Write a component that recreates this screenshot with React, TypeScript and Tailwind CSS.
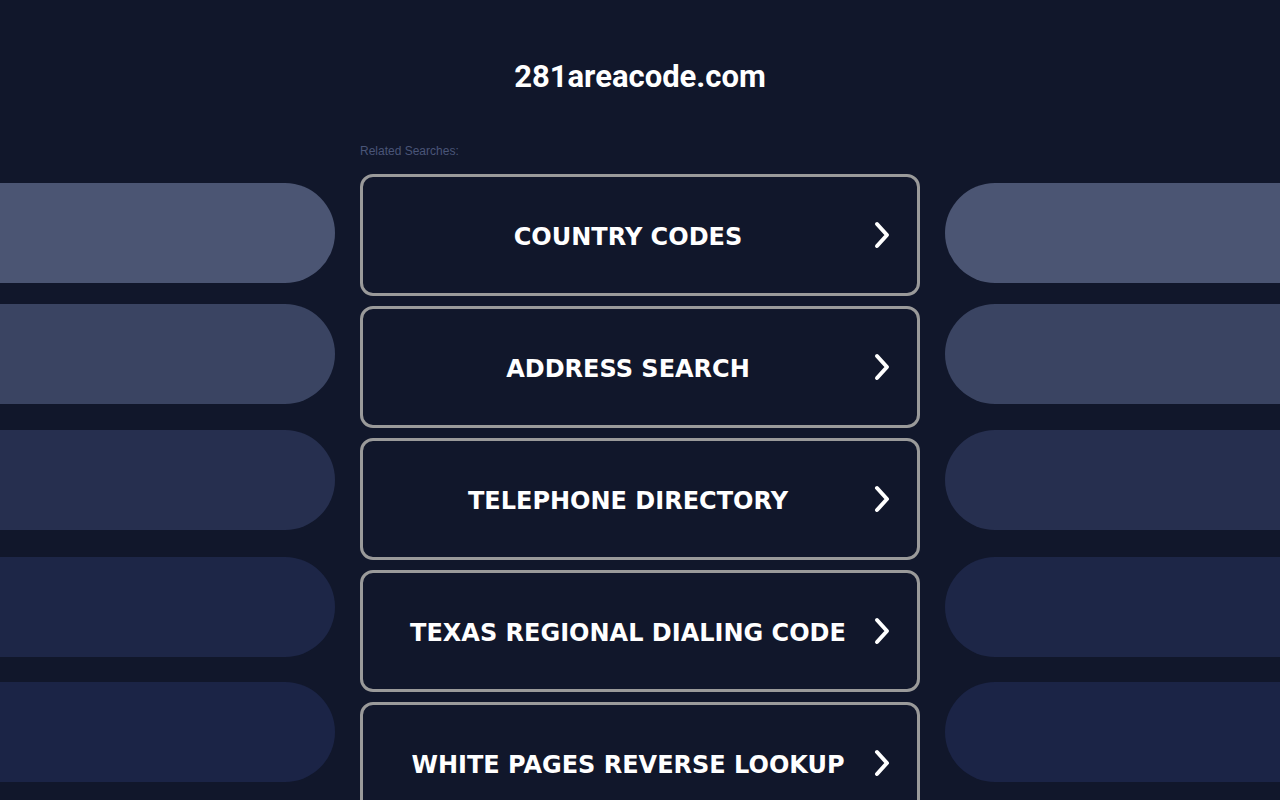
import React from "react";

const items = [
  "COUNTRY CODES",
  "ADDRESS SEARCH",
  "TELEPHONE DIRECTORY",
  "TEXAS REGIONAL DIALING CODE",
  "WHITE PAGES REVERSE LOOKUP",
];

const pills = [
  { color: "bg-[#4b5573]", mt: "mt-0" },
  { color: "bg-[#3a4462]", mt: "mt-[21px]" },
  { color: "bg-[#262f4f]", mt: "mt-[26px]" },
  { color: "bg-[#1d2647]", mt: "mt-[27px]" },
  { color: "bg-[#1b2446]", mt: "mt-[25px]" },
];

function Chevron() {
  return (
    <svg width="18" height="28" viewBox="0 0 18 28" className="shrink-0">
      <path d="M4 3 L14 14 L4 25" fill="none" stroke="#ffffff" strokeWidth="4" strokeLinecap="round" strokeLinejoin="round" />
    </svg>
  );
}

function PillColumn({ side }: { side: "left" | "right" }) {
  return (
    <div className="w-[335px] shrink-0 pt-[183px] flex flex-col">
      {pills.map((p, i) => (
        <div
          key={i}
          className={`${p.color} ${p.mt} h-[100px] w-full ${side === "left" ? "rounded-r-[50px]" : "rounded-l-[50px]"}`}
        />
      ))}
    </div>
  );
}

export default function App() {
  return (
    <div className="w-full h-[800px] overflow-hidden bg-[#11172b] relative" style={{ fontFamily: "Arial, 'Liberation Sans', sans-serif" }}>
      <div className="absolute inset-x-0 top-0 flex justify-center pt-[57px]">
        <h1 className="text-white text-[31px] font-bold leading-[40px]" style={{ fontFamily: "Roboto, 'Liberation Sans', sans-serif" }}>
          281areacode.com
        </h1>
      </div>
      <div className="flex justify-between">
        <PillColumn side="left" />
        <div className="w-[560px] shrink-0 pt-[144px] flex flex-col">
          <div className="text-[#4a5578] text-[12px] leading-[15px] h-[30px]" style={{ fontFamily: "Arial, 'Liberation Sans', sans-serif" }}>
            Related Searches:
          </div>
          <div className="flex flex-col gap-[10px]">
            {items.map((t) => (
              <div
                key={t}
                className="h-[122px] border-[3px] border-[#9a9a9a] rounded-[13px] flex items-center pl-[24px] pr-[26px] gap-[4px]"
              >
                <span
                  className="flex-1 text-center text-white font-bold text-[24px] leading-[30px] whitespace-nowrap pt-[4px]"
                  style={{ fontFamily: "Verdana, 'DejaVu Sans', sans-serif" }}
                >
                  {t}
                </span>
                <Chevron />
              </div>
            ))}
          </div>
        </div>
        <PillColumn side="right" />
      </div>
    </div>
  );
}
